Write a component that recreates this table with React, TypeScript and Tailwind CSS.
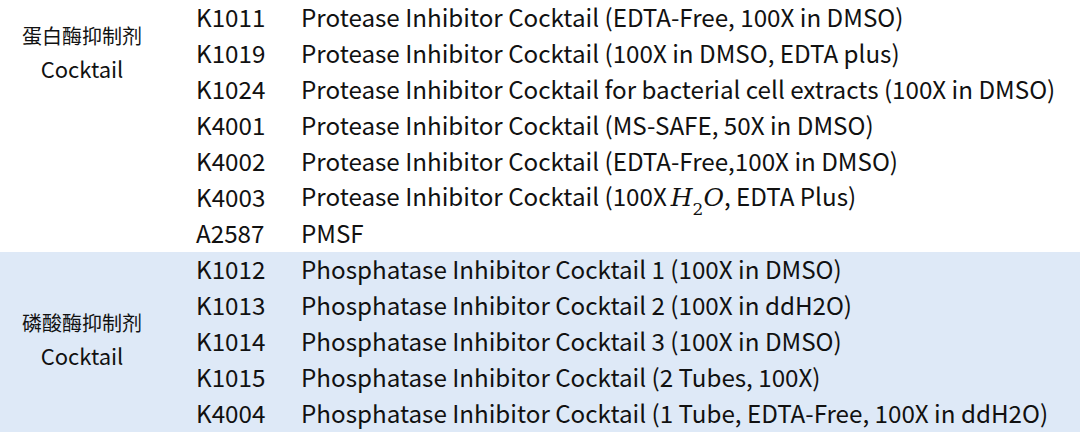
import React from "react";

const g1 = [
  ["K1011", "Protease Inhibitor Cocktail (EDTA-Free, 100X in DMSO)"],
  ["K1019", "Protease Inhibitor Cocktail (100X in DMSO, EDTA plus)"],
  ["K1024", "Protease Inhibitor Cocktail for bacterial cell extracts (100X in DMSO)"],
  ["K4001", "Protease Inhibitor Cocktail (MS-SAFE, 50X in DMSO)"],
  ["K4002", "Protease Inhibitor Cocktail (EDTA-Free,100X in DMSO)"],
  ["K4003", "H2O"],
  ["A2587", "PMSF"],
];
const g2 = [
  ["K1012", "Phosphatase Inhibitor Cocktail 1 (100X in DMSO)"],
  ["K1013", "Phosphatase Inhibitor Cocktail 2 (100X in ddH2O)"],
  ["K1014", "Phosphatase Inhibitor Cocktail 3 (100X in DMSO)"],
  ["K1015", "Phosphatase Inhibitor Cocktail (2 Tubes, 100X)"],
  ["K4004", "Phosphatase Inhibitor Cocktail (1 Tube, EDTA-Free, 100X in ddH2O)"],
];

function Desc({ text }: { text: string }) {
  if (text === "H2O") {
    return (
      <span>
        Protease Inhibitor Cocktail (100X
        <span className="italic ml-[4px] text-[25px]" style={{ fontFamily: '"DejaVu Serif", "Liberation Serif", serif' }}>
          H<sub className="not-italic text-[17px] align-[-5px]">2</sub>O
        </span>
        , EDTA Plus)
      </span>
    );
  }
  return <span>{text}</span>;
}

function Rows({ rows }: { rows: string[][] }) {
  return (
    <div className="flex flex-col">
      {rows.map(([code, d]) => (
        <div key={code} className="h-[36px] flex items-center leading-[34px] pb-[2px]">
          <div className="w-[105px] shrink-0">{code}</div>
          <div className="whitespace-nowrap">
            <Desc text={d} />
          </div>
        </div>
      ))}
    </div>
  );
}

function Label({ zh }: { zh: string }) {
  return (
    <>
      <div className="text-[20px] leading-[32px]">{zh}</div>
      <div className="text-[22px] leading-[32px]">Cocktail</div>
    </>
  );
}

export default function App() {
  return (
    <div
      className="w-[1080px] h-[433px] bg-white text-[#111] text-[24.2px] overflow-hidden"
      style={{ fontFamily: '"Noto Sans CJK SC", "Noto Sans", sans-serif' }}
    >
      <div className="flex">
        <div className="w-[164px] shrink-0 flex flex-col items-center pt-[20px]">
          <Label zh="蛋白酶抑制剂" />
        </div>
        <div className="pl-[32px]">
          <Rows rows={g1} />
        </div>
      </div>
      <div className="flex bg-[#dee9f7]">
        <div className="w-[164px] shrink-0 flex flex-col items-center justify-center pb-[6px]">
          <Label zh="磷酸酶抑制剂" />
        </div>
        <div className="pl-[32px]">
          <Rows rows={g2} />
        </div>
      </div>
    </div>
  );
}
